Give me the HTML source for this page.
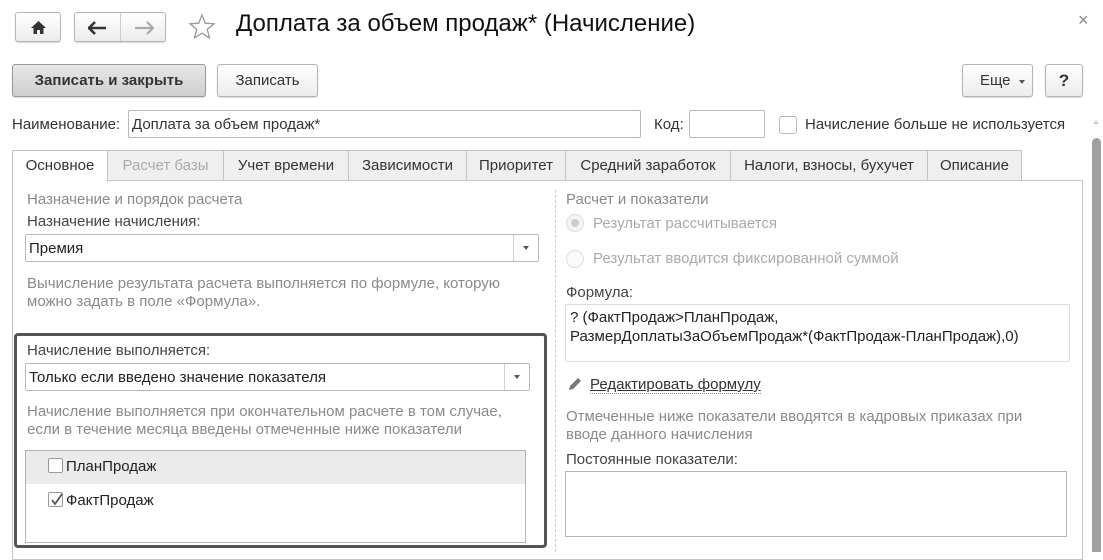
<!DOCTYPE html>
<html><head><meta charset="utf-8"><style>
*{box-sizing:border-box;margin:0;padding:0}
body{width:1103px;height:552px;overflow:hidden;background:#fff;font-family:"Liberation Sans",Arial,sans-serif;font-size:15px;color:#333;position:relative}
.a{position:absolute;white-space:nowrap}
.btn{position:absolute;border:1px solid #b5b5b5;border-radius:3px;background:linear-gradient(#fff,#ececec);box-shadow:0 1px 1px rgba(0,0,0,.15)}
.inp{position:absolute;border:1px solid #b8b8b8;border-radius:2px;background:#fff}
.g{color:#8a8a8a}
.tab{position:absolute;top:150px;height:31px;border:1px solid #c4c4c4;background:#efefef;text-align:center;line-height:29px;color:#333}
.dd{position:absolute;right:0;top:0;bottom:0;width:25px;border-left:1px solid #d0d0d0}
.dd:after{content:"";position:absolute;left:9px;top:11px;border:3px solid transparent;border-top:4px solid #555}
</style></head><body>
<!-- top nav -->
<div class="btn" style="left:15px;top:12px;width:46px;height:30px"><svg style="position:absolute;left:14px;top:7px" width="17" height="15"><path d="M8.5 1L1 8h2.5v6h3.5v-4h3v4h3.5V8H16z" fill="#333"/></svg></div>
<div class="btn" style="left:74px;top:12px;width:92px;height:30px"><div style="position:absolute;left:45px;top:0;bottom:0;border-left:1px solid #ccc"></div>
<svg style="position:absolute;left:13px;top:8px" width="20" height="14"><path d="M1 7h17M7 1L1 7l6 6" stroke="#333" stroke-width="2.6" fill="none"/></svg>
<svg style="position:absolute;left:59px;top:8px" width="20" height="14"><path d="M1 7h17M13 1l6 6-6 6" stroke="#aaa" stroke-width="2.2" fill="none"/></svg></div>
<svg class="a" style="left:188px;top:13px" width="28" height="28"><path d="M14 2l3.3 8.2 8.7.6-6.7 5.6 2.2 8.6L14 20.2 6.5 25l2.2-8.6L2 10.8l8.7-.6z" fill="none" stroke="#999" stroke-width="1.3"/></svg>
<div class="a" style="left:236px;top:10px;font-size:24px;color:#111">Доплата за объем продаж* (Начисление)</div>
<div class="a" style="left:1078px;top:10px;font-size:18px;color:#888">×</div>
<!-- buttons -->
<div class="btn" style="left:12px;top:64px;width:194px;height:33px;background:linear-gradient(#e6e6e6,#cfcfcf);border-color:#999;font-weight:bold;text-align:center;line-height:31px;color:#333">Записать и закрыть</div>
<div class="btn" style="left:217px;top:64px;width:101px;height:33px;text-align:center;line-height:31px">Записать</div>
<div class="btn" style="left:962px;top:64px;width:71px;height:33px;line-height:31px;padding-left:17px">Еще<span style="position:absolute;left:56px;top:15px;border:3px solid transparent;border-top:4px solid #555"></span></div>
<div class="btn" style="left:1045px;top:64px;width:38px;height:33px;text-align:center;line-height:31px;font-weight:bold;font-size:17px">?</div>
<!-- name row -->
<div class="a" style="left:12px;top:116px">Наименование:</div>
<div class="inp" style="left:128px;top:110px;width:513px;height:28px;padding:5px 3px">Доплата за объем продаж*</div>
<div class="a" style="left:654px;top:116px">Код:</div>
<div class="inp" style="left:689px;top:110px;width:76px;height:28px"></div>
<div class="inp" style="left:779px;top:116px;width:18px;height:18px;border-radius:3px"></div>
<div class="a" style="left:805px;top:116px">Начисление больше не используется</div>
<div class="a" style="left:1093px;top:117px;border:3px solid transparent;border-bottom:4px solid #ccc"></div>
<div class="a" style="left:1092px;top:138px;width:9px;height:414px;background:#a0a0a0;border-radius:5px 5px 0 0"></div>
<!-- tabs -->
<div class="tab" style="left:107px;width:117px;color:#aaa">Расчет базы</div>
<div class="tab" style="left:223px;width:126px">Учет времени</div>
<div class="tab" style="left:348px;width:119px">Зависимости</div>
<div class="tab" style="left:466px;width:100px">Приоритет</div>
<div class="tab" style="left:565px;width:166px">Средний заработок</div>
<div class="tab" style="left:730px;width:198px">Налоги, взносы, бухучет</div>
<div class="tab" style="left:927px;width:95px">Описание</div>
<div class="a" style="left:12px;top:180px;width:1071px;height:380px;border:1px solid #c4c4c4;background:#fff"></div>
<div class="tab" style="left:12px;width:96px;height:32px;background:#fff;border-bottom:none">Основное</div>
<div class="a" style="left:555px;top:190px;height:362px;border-left:1px dashed #ccc"></div>
<!-- left column -->
<div class="a g" style="left:27px;top:191px">Назначение и порядок расчета</div>
<div class="a" style="left:27px;top:213px;color:#444">Назначение начисления:</div>
<div class="inp" style="left:25px;top:234px;width:514px;height:28px;padding:5px 3px;color:#222">Премия<div class="dd"></div></div>
<div class="a g" style="left:27px;top:275px;line-height:18px">Вычисление результата расчета выполняется по формуле, которую<br>можно задать в поле «Формула».</div>
<div class="a" style="left:14px;top:333px;width:533px;height:215px;border:3px solid #555;border-radius:4px"></div>
<div class="a" style="left:27px;top:342px;color:#444">Начисление выполняется:</div>
<div class="inp" style="left:25px;top:363px;width:505px;height:28px;padding:5px 3px;color:#222">Только если введено значение показателя<div class="dd"></div></div>
<div class="a g" style="left:27px;top:403px;line-height:18px">Начисление выполняется при окончательном расчете в том случае,<br>если в течение месяца введены отмеченные ниже показатели</div>
<div class="a" style="left:25px;top:450px;width:501px;height:93px;border:1px solid #b5b5b5"></div>
<div class="a" style="left:26px;top:451px;width:499px;height:33px;background:#ebebeb"></div>
<div class="a" style="left:48px;top:458px;width:15px;height:15px;border:1px solid #999;border-radius:2px;background:#fff"></div>
<div class="a" style="left:66px;top:458px;color:#222">ПланПродаж</div>
<div class="a" style="left:48px;top:492px;width:15px;height:15px;border:1px solid #999;border-radius:2px;background:#fff"><svg style="position:absolute;left:1px;top:0" width="14" height="14"><path d="M2 7l3 4 7-10" stroke="#555" stroke-width="1.8" fill="none"/></svg></div>
<div class="a" style="left:66px;top:492px;color:#222">ФактПродаж</div>
<!-- right column -->
<div class="a g" style="left:566px;top:191px">Расчет и показатели</div>
<div class="a" style="left:566px;top:214px;width:18px;height:18px;border:1px solid #ddd;border-radius:50%;background:#f4f4f4"><div style="position:absolute;left:4px;top:4px;width:8px;height:8px;border-radius:50%;background:#ccc"></div></div>
<div class="a" style="left:593px;top:215px;color:#aaa">Результат рассчитывается</div>
<div class="a" style="left:566px;top:250px;width:18px;height:18px;border:1px solid #ddd;border-radius:50%;background:#fafafa"></div>
<div class="a" style="left:593px;top:250px;color:#aaa">Результат вводится фиксированной суммой</div>
<div class="a" style="left:566px;top:284px;color:#444">Формула:</div>
<div class="inp" style="left:565px;top:304px;width:505px;height:58px;border-color:#ddd;padding:3px 4px;line-height:19px;color:#222;white-space:nowrap">? (ФактПродаж&gt;ПланПродаж,<br>РазмерДоплатыЗаОбъемПродаж*(ФактПродаж-ПланПродаж),0)</div>
<svg class="a" style="left:567px;top:376px" width="16" height="16"><path d="M2 14l1-4 8-8 3 3-8 8z" fill="#777"/></svg>
<div class="a" style="left:590px;top:376px;color:#333;border:1px dotted #888;border-top:none;border-left:none;border-right:none;text-decoration:underline">Редактировать формулу</div>
<div class="a g" style="left:566px;top:408px;line-height:18px">Отмеченные ниже показатели вводятся в кадровых приказах при<br>вводе данного начисления</div>
<div class="a" style="left:566px;top:451px;color:#444">Постоянные показатели:</div>
<div class="a" style="left:565px;top:471px;width:502px;height:66px;border:1px solid #b5b5b5"></div>
</body></html>
